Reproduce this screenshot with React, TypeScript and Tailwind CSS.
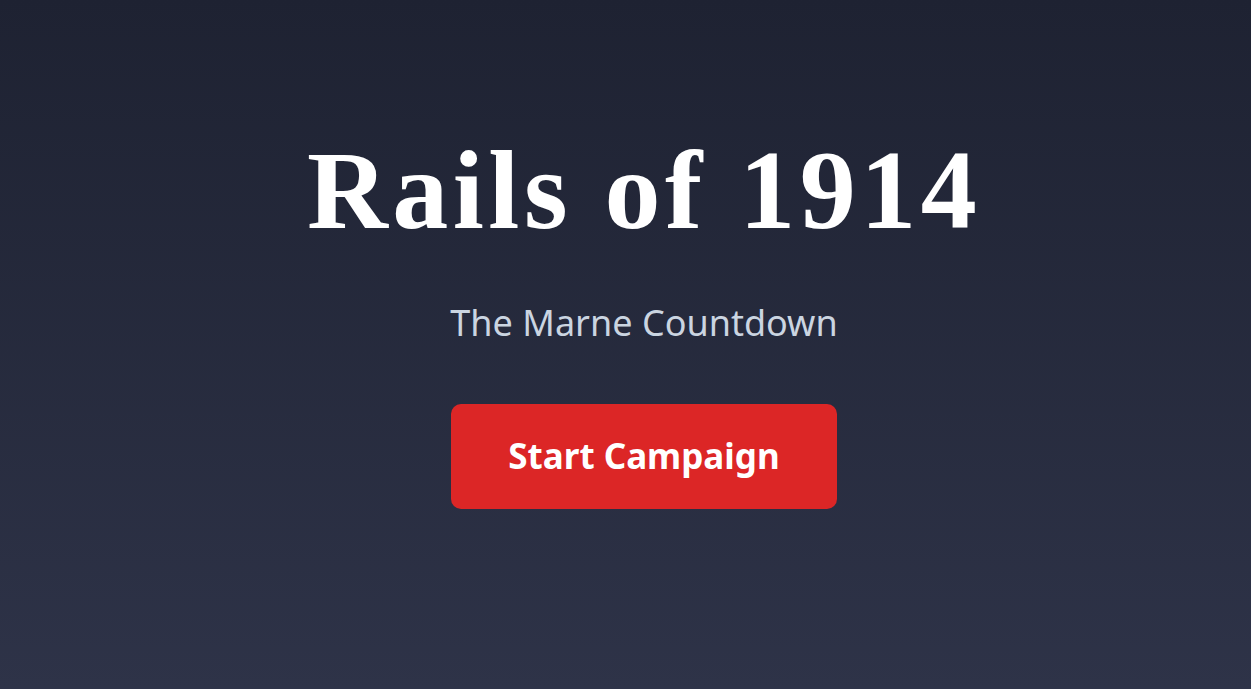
export default function App() {
  return (
    <div className="flex h-[689px] w-full flex-col items-center bg-gradient-to-b from-[#1e2232] to-[#2e3348] pl-[37px] pt-[134px]">
      <h1 className="font-['Liberation_Serif',serif] text-[112px] font-bold leading-none tracking-[0.04em] text-white">
        Rails of 1914
      </h1>
      <p className="mt-[57px] font-['Noto_Sans',sans-serif] text-[36px] leading-[40px] text-[#cbd5e1]">
        The Marne Countdown
      </p>
      <button className="mt-[61px] h-[105px] w-[386px] rounded-[10px] bg-[#dc2626] font-['Noto_Sans',sans-serif] text-[35px] font-bold text-white">
        Start Campaign
      </button>
    </div>
  );
}
